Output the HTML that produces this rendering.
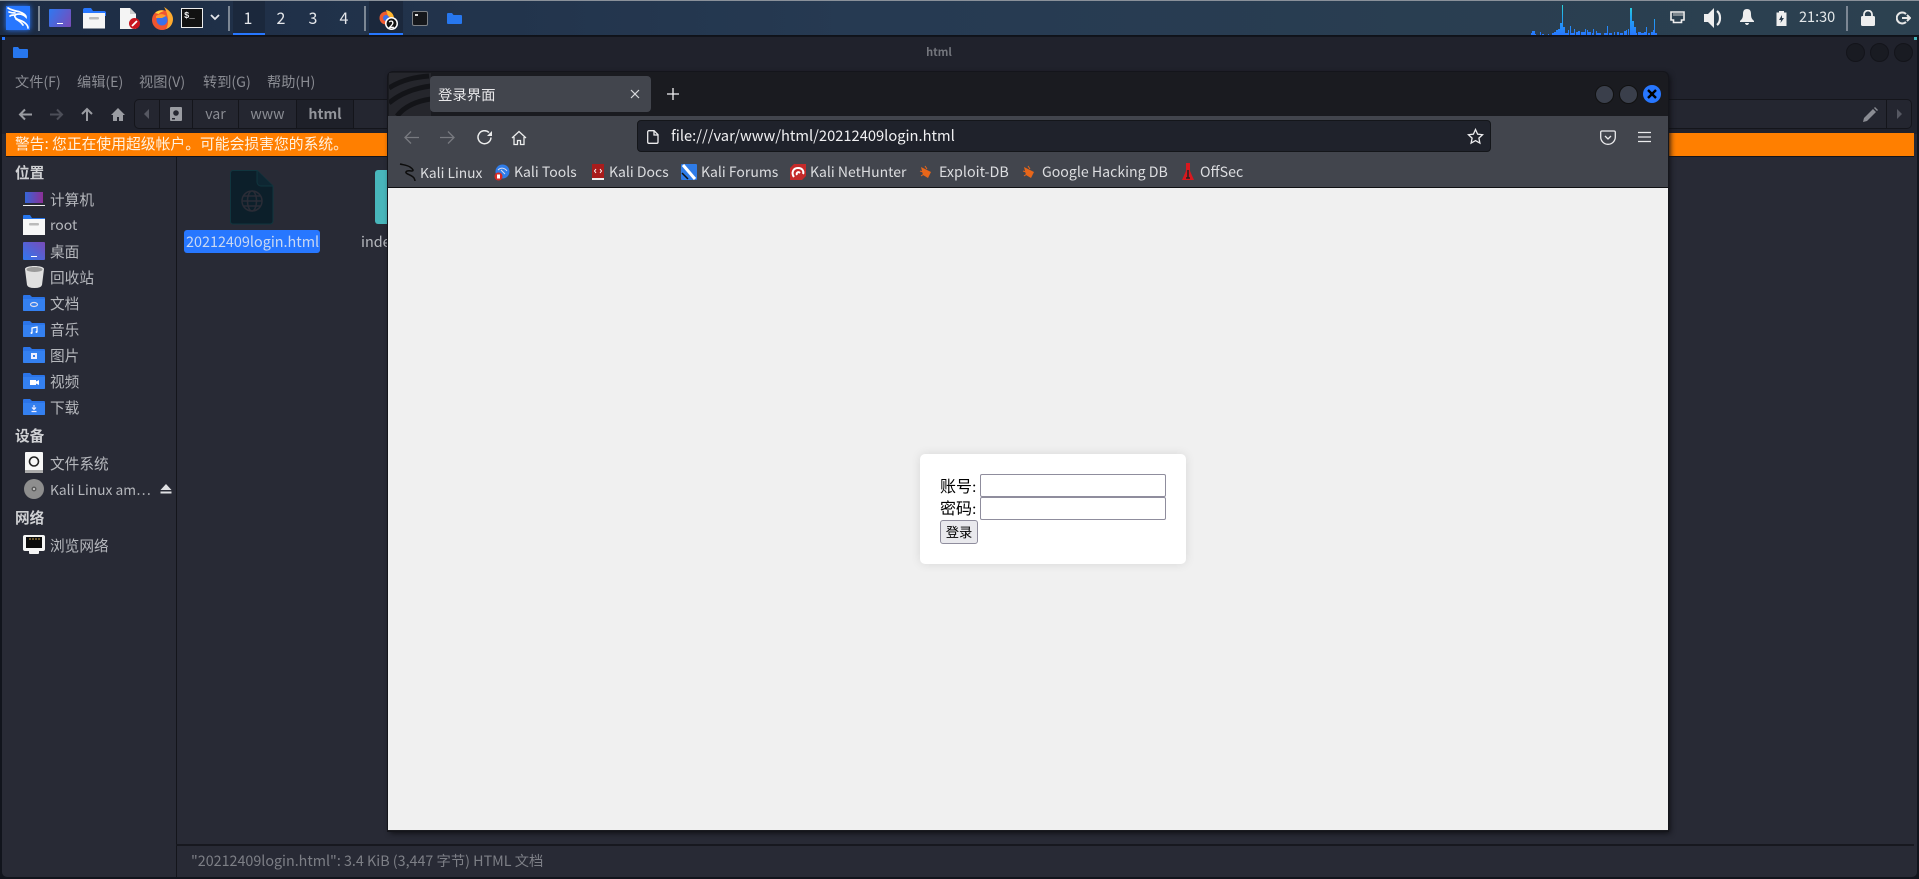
<!DOCTYPE html>
<html><head><meta charset="utf-8"><title>登录界面</title>
<style>
html,body{margin:0;padding:0;width:1919px;height:879px;overflow:hidden;background:#11141c}
body{position:relative;font-family:"Noto Sans CJK SC","Liberation Sans",sans-serif;font-size:14px}
.a,.t,svg{position:absolute;display:block}
.t{white-space:nowrap;line-height:20px;height:20px}
.m{color:#8a8c93;font-size:14.2px}
.s{color:#b6b8bd}
.c{font-size:14.67px}
.h{color:#cfd0d3;font-weight:700;font-size:14.67px}
.b{color:#dcdde0}
.ws{color:#e4e6ea;font-size:16px;width:32px;text-align:center}
input{position:absolute;box-sizing:border-box;margin:0;padding:1px 2px;border:1px solid #8f8d9d;border-radius:2px;background:#fff}
</style></head><body>

<!-- top panel -->
<div class="a" style="left:0;top:0;width:1919px;height:35px;background:linear-gradient(90deg,#1d2c44,#263a52 45%,#2c4150)"></div>
<div class="a" style="left:0;top:0;width:1919px;height:1px;background:#8a919a"></div>
<div class="a" style="left:0;top:35px;width:1919px;height:1px;background:#0f1219"></div>

<div class="a" style="left:6px;top:6px;width:24px;height:24px;background:#2777ff;box-shadow:0 0 5px #2777ff"></div>
<svg style="left:5px;top:5px" width="26" height="26" viewBox="0 0 26 26" fill="none" stroke="#fff" stroke-width="1.7" stroke-linecap="round"><path d="M3 3c5 3 9 3 12 4 3 1 6 3 6 5-2-2-4-3-7-3-3 0-5 1-4 3 1 3 7 3 10 6 2 1.500 3 3 3 5"/><path d="M4 7c3 1 4 1 6 1M5 11c1-1 3-1 4-1"/><path d="M11 14c3 2 5 3 7 6"/></svg>
<div class="a" style="left:38px;top:6px;width:2px;height:25px;background:#7c8794"></div>
<div class="a" style="left:49px;top:9px;width:22px;height:18px;border-radius:1px;background:linear-gradient(120deg,#2f78f0,#7a4bb8)"></div>
<div class="a" style="left:57px;top:23px;width:6px;height:1px;background:#fff"></div>
<svg style="left:83px;top:8px" width="23" height="21" viewBox="0 0 23 21"><path d="M0 2q0-2 2-2h6l2 3h11q2 0 2 2v3H0z" fill="#2777ff"/><rect y="5" width="22" height="15.500" fill="#f5f5f5"/><rect x="6" y="9" width="10" height="2.500" rx="1" fill="#bbb"/></svg>
<svg style="left:119px;top:8px" width="22" height="22" viewBox="0 0 22 22"><path d="M1 0h10l6 6v15H1z" fill="#f4f4f4"/><path d="M11 0l6 6h-6z" fill="#ccc"/><circle cx="15.500" cy="15.500" r="5.500" fill="#c8141e"/><path d="M13 18l5-5" stroke="#fff" stroke-width="1.800"/></svg>
<svg style="left:151px;top:7px" width="23" height="23" viewBox="0 0 23 23"><circle cx="11" cy="13" r="10" fill="#f0552f"/><path d="M13 0c5 3 9 7 9 12 0 5-3 9-7 10 3-4 3-14-2-22z" fill="#ffab2e"/><path d="M4 6c3-3 7-3 9-2-3 1-5 2-5 3z" fill="#ffd23d"/><circle cx="11" cy="13" r="5.500" fill="#3b70e8"/><path d="M5 9c3-2 7-3 10 0l-4 2-6 0z" fill="#ff9a2e"/></svg>
<div class="a" style="left:181px;top:8px;width:20px;height:18px;background:#111;border:1px solid #eee"></div>
<div class="t" style="left:184px;top:9px;font-size:9px;line-height:14px;color:#eee;font-family:'Liberation Mono',monospace;font-weight:700;height:14px">$_</div>
<svg style="left:210px;top:13px" width="10" height="9" viewBox="0 0 10 9" fill="none" stroke="#e4e6ea" stroke-width="1.800"><path d="M1 2l4 4 4-4"/></svg>
<div class="a" style="left:228px;top:6px;width:2px;height:25px;background:#7c8794"></div>
<div class="a" style="left:233px;top:1px;width:32px;height:32px;background:#1b283c"></div>
<div class="a" style="left:233px;top:33px;width:32px;height:2px;background:#2777ff"></div>
<div class="t ws" style="left:232px;top:7px">1</div>
<div class="t ws" style="left:265px;top:7px">2</div>
<div class="t ws" style="left:297px;top:7px">3</div>
<div class="t ws" style="left:328px;top:7px">4</div>
<div class="a" style="left:364px;top:6px;width:2px;height:25px;background:#7c8794"></div>
<div class="a" style="left:369px;top:1px;width:34px;height:32px;background:#1b283c"></div>
<div class="a" style="left:369px;top:33px;width:34px;height:2px;background:#2777ff"></div>
<svg style="left:378px;top:9px" width="24" height="22" viewBox="0 0 24 22"><circle cx="8" cy="9" r="6.500" fill="#ee5a30"/><path d="M8 1c5 1 8 4 8 9l-6-3z" fill="#ffb52e"/><circle cx="8" cy="9" r="3" fill="#3b70e8"/><circle cx="13.500" cy="14.500" r="6.500" fill="#fff"/><circle cx="13.500" cy="14.500" r="5" fill="#111"/></svg>
<div class="t" style="left:386px;top:14px;width:11px;text-align:center;font-size:10px;line-height:19px;height:19px;color:#fff;font-weight:700">2</div>
<div class="a" style="left:412px;top:11px;width:14px;height:13px;background:#15171b;border:1px solid #7d8186;border-radius:2px"></div>
<div class="a" style="left:415px;top:14px;width:3px;height:2px;background:#ddd"></div>
<svg style="left:447px;top:13px" width="15" height="11" viewBox="0 0 15 11"><path d="M0 1q0-1 1-1h4l1.500 2H14q1 0 1 1v7q0 1-1 1H1q-1 0-1-1z" fill="#2777ee"/></svg>

<!-- graph -->
<svg style="left:1530px;top:5px" width="128" height="30" viewBox="0 0 128 30">
<defs><linearGradient id="g" x1="0" y1="30" x2="0" y2="0" gradientUnits="userSpaceOnUse"><stop offset="0" stop-color="#2777ff"/><stop offset=".6" stop-color="#22a6f0"/><stop offset="1" stop-color="#2bd4d8"/></linearGradient></defs>
<path fill="url(#g)" d="M1 28h1v2H1zM2 26h3v4H2zM5 29h1v1H5zM10 27h1v3h-1zM12 29h2v1h-2zM18 29h1v1h-1zM22 28h2v2h-2zM24 27h2v3h-2zM26 25h2v5h-2zM28 24h2v6h-2zM30 18h2v12h-2zM32 0h1v30h-1zM33 22h2v8h-2zM35 28h3v2h-3zM38 25h1v5h-1zM40 21h1v9h-1zM41 28h3v2h-3zM44 24h1v6h-1zM46 27h2v3h-2zM48 26h2v4h-2zM51 27h4v3h-4zM55 24h1v6h-1zM57 25h1v5h-1zM58 27h3v3h-3zM62 28h1v2h-1zM63 24h1v6h-1zM66 26h1v4h-1zM67 28h4v2h-4zM74 28h3v2h-3zM77 21h1v9h-1zM79 28h3v2h-3zM84 27h1v3h-1zM87 27h2v3h-2zM90 28h3v2h-3zM94 26h2v4h-2zM96 25h1v5h-1zM98 24h1v6h-1zM100 3h2v27h-2zM102 16h2v14h-2zM104 22h2v8h-2zM106 28h1v2h-1zM108 27h3v3h-3zM111 28h3v2h-3zM114 27h2v3h-2zM116 22h1v8h-1zM118 28h2v2h-2zM121 27h2v3h-2zM123 25h1v5h-1zM124 14h1v16h-1zM125 28h2v2h-2z"/></svg>
<svg style="left:1670px;top:11px" width="15" height="13" viewBox="0 0 15 13" fill="none" stroke="#eee"><path d="M1 1h13v8h-2.500v2.500h-8V9H1z" stroke-width="1.600"/><path d="M4 2v3M6 2v3M8 2v3M10 2v3M12 2v3" stroke="#ccc" stroke-width="1"/></svg>
<svg style="left:1704px;top:8px" width="20" height="20" viewBox="0 0 20 20" fill="none"><path d="M0 6h4l6-6v20l-6-6H0z" fill="#eee"/><path d="M13 3c4 3 4 11 0 14" stroke="#eee" stroke-width="2.200"/></svg>
<svg style="left:1739px;top:9px" width="16" height="16" viewBox="0 0 16 16"><path d="M8 0c3 0 4 2 4 5 0 4 1 5 3 7v1H1v-1c2-2 3-3 3-7 0-3 1-5 4-5zM6 14h4c0 1-1 2-2 2s-2-1-2-2z" fill="#eee"/></svg>
<svg style="left:1776px;top:11px" width="11" height="15" viewBox="0 0 11 15"><path d="M3 0h5v1.500h2.500V15H.5V1.500H3z" fill="#eee"/><path d="M6 4L3 9h2L4.500 12 8 7H6z" fill="#2a3d4e"/></svg>
<div class="t" style="left:1799px;top:7px;font-size:14.5px;color:#e4e8ea">21:30</div>
<div class="a" style="left:1846px;top:6px;width:2px;height:25px;background:#7c8794"></div>
<svg style="left:1861px;top:10px" width="15" height="16" viewBox="0 0 15 16"><rect y="6" width="14" height="10" rx="1.500" fill="#eee"/><path d="M3 7V4.500a4 4 0 0 1 8 0V7" fill="none" stroke="#eee" stroke-width="1.800"/></svg>
<svg style="left:1896px;top:11px" width="15" height="14" viewBox="0 0 15 14" fill="none" stroke="#e8e8e8" stroke-width="2"><path d="M10 3a5.500 5.500 0 1 0 0 8"/><path d="M6 7h8M11 4l3 3-3 3"/></svg>

<!-- file manager -->
<div class="a" style="left:2px;top:37px;width:1915px;height:840px;background:#282a35;border-radius:5px"></div>
<div class="a" style="left:2px;top:37px;width:1915px;height:97px;background:#20222c;border-radius:5px 5px 0 0"></div>
<div class="a" style="left:2px;top:37px;width:3px;height:3px;background:#2777ff"></div>
<div class="a" style="left:1914px;top:37px;width:3px;height:3px;background:#44b4b8"></div>
<svg style="left:13px;top:47px" width="15" height="11" viewBox="0 0 15 11"><path d="M0 1q0-1 1-1h4l1.500 2H14q1 0 1 1v7q0 1-1 1H1q-1 0-1-1z" fill="#2777ee"/></svg>
<div class="t" style="left:899px;top:42px;width:80px;text-align:center;font-size:11px;font-weight:700;color:#74767d">html</div>
<div class="a" style="left:1846px;top:43px;width:17px;height:17px;border-radius:50%;background:#191b22;border:1px solid #13141a"></div>
<div class="a" style="left:1870px;top:43px;width:17px;height:17px;border-radius:50%;background:#191b22;border:1px solid #13141a"></div>
<div class="a" style="left:1894px;top:43px;width:17px;height:17px;border-radius:50%;background:#191b22;border:1px solid #13141a"></div>

<div class="t m" style="left:15px;top:72px">文件(F)</div>
<div class="t m" style="left:77px;top:72px">编辑(E)</div>
<div class="t m" style="left:139px;top:72px">视图(V)</div>
<div class="t m" style="left:203px;top:72px">转到(G)</div>
<div class="t m" style="left:267px;top:72px">帮助(H)</div>

<svg style="left:18px;top:107px" width="115" height="15" viewBox="0 0 115 15" fill="none" stroke-width="2"><path d="M14 7.500H2M7 2.500l-5 5 5 5" stroke="#9a9ca2"/><path d="M32 7.500h12M39 2.500l5 5-5 5" stroke="#4c4e58"/><path d="M69 14V2M64 7l5-5 5 5" stroke="#9a9ca2"/><path d="M100 1l-7 7h2v6h4v-4h2v4h4V8h2z" fill="#9a9ca2" stroke="none"/></svg>

<div class="a" style="left:134px;top:99px;width:1776px;height:28px;border:1px solid #14151b;border-radius:5px;background:#242630"></div>
<div class="a" style="left:159px;top:100px;width:1px;height:28px;background:#14151b"></div>
<div class="a" style="left:192px;top:100px;width:1px;height:28px;background:#14151b"></div>
<div class="a" style="left:238px;top:100px;width:1px;height:28px;background:#14151b"></div>
<div class="a" style="left:296px;top:100px;width:1px;height:28px;background:#14151b"></div>
<div class="a" style="left:297px;top:100px;width:56px;height:28px;background:#1e2029"></div>
<div class="a" style="left:353px;top:100px;width:1px;height:28px;background:#14151b"></div>
<svg style="left:143px;top:108px" width="8" height="12" viewBox="0 0 8 12"><path d="M6 1L1 6l5 5z" fill="#565862"/></svg>
<svg style="left:170px;top:107px" width="12" height="14" viewBox="0 0 12 14"><path d="M1 0h10q1 0 1 1v12q0 1-1 1H1q-1 0-1-1V1q0-1 1-1z" fill="#9a9ca2"/><circle cx="6" cy="6" r="2.800" fill="#242630"/><rect x="2" y="11" width="3" height="1.500" fill="#242630"/></svg>
<div class="t m" style="left:193px;top:104px;width:45px;text-align:center">var</div>
<div class="t m" style="left:239px;top:104px;width:57px;text-align:center">www</div>
<div class="t m" style="left:297px;top:104px;width:56px;text-align:center;font-weight:700;color:#93959b">html</div>
<svg style="left:1863px;top:107px" width="15" height="15" viewBox="0 0 15 15"><path d="M0 15l1-4L10 2l3 3-9 9zM11 1l1-1 3 3-1 1z" fill="#8a8c93"/></svg>
<div class="a" style="left:1886px;top:100px;width:1px;height:28px;background:#14151b"></div>
<svg style="left:1895px;top:108px" width="8" height="12" viewBox="0 0 8 12"><path d="M2 1l5 5-5 5z" fill="#565862"/></svg>

<div class="a" style="left:6px;top:133px;width:1908px;height:23px;background:#ff7f00"></div>
<div class="t" style="left:15px;top:134px;color:#fff2e2;font-size:14.8px">警告: 您正在使用超级帐户。可能会损害您的系统。</div>
<div class="a" style="left:6px;top:156px;width:1908px;height:1px;background:#14151b"></div>

<!-- sidebar -->
<div class="a" style="left:176px;top:157px;width:1px;height:720px;background:#14151b"></div>
<div class="a" style="left:176px;top:844px;width:1738px;height:2px;background:#17181f"></div>
<div class="t h" style="left:15px;top:163px">位置</div>
<div class="t s c" style="left:50px;top:190px">计算机</div>
<div class="t s" style="left:50px;top:215px">root</div>
<div class="t s c" style="left:50px;top:242px">桌面</div>
<div class="t s c" style="left:50px;top:268px">回收站</div>
<div class="t s c" style="left:50px;top:294px">文档</div>
<div class="t s c" style="left:50px;top:320px">音乐</div>
<div class="t s c" style="left:50px;top:346px">图片</div>
<div class="t s c" style="left:50px;top:372px">视频</div>
<div class="t s c" style="left:50px;top:398px">下载</div>
<div class="t h" style="left:15px;top:426px">设备</div>
<div class="t s c" style="left:50px;top:454px">文件系统</div>
<div class="t s" style="left:50px;top:479px;font-size:13.8px">Kali Linux am…</div>
<div class="t h" style="left:15px;top:508px">网络</div>
<div class="t s c" style="left:50px;top:536px">浏览网络</div>

<svg style="left:23px;top:192px" width="22" height="15" viewBox="0 0 22 15"><defs><linearGradient id="p" x1="0" x2="1"><stop offset="0" stop-color="#3566d8"/><stop offset="1" stop-color="#8d2f96"/></linearGradient></defs><rect x="2" y="0" width="18" height="11" fill="url(#p)"/><rect x="0" y="13" width="22" height="1" fill="#eee"/></svg>
<svg style="left:23px;top:215px" width="22" height="20" viewBox="0 0 22 20"><path d="M0 1q0-1 1-1h6l2 3h13v3H0z" fill="#2777ee"/><rect y="4" width="22" height="16" fill="#f7f7f7"/><rect x="6" y="8" width="10" height="2.500" rx="1" fill="#bbb"/></svg>
<svg style="left:23px;top:242px" width="22" height="18" viewBox="0 0 22 18"><defs><linearGradient id="q" x1="0" x2="1" y1="1" y2="0"><stop offset="0" stop-color="#2f78f0"/><stop offset="1" stop-color="#7a4bb8"/></linearGradient></defs><rect width="22" height="18" rx="1" fill="url(#q)"/><rect x="8" y="14" width="6" height="1" fill="#fff"/></svg>
<svg style="left:25px;top:266px" width="19" height="22" viewBox="0 0 19 22"><path d="M0 3c0-4 19-4 19 0l-2 16q-1 3-7.500 3T2 19z" fill="#e0e0e0"/><ellipse cx="9.500" cy="3.500" rx="8" ry="2.500" fill="#9a9a9a"/></svg>
<svg style="left:23px;top:295px" width="22" height="16" viewBox="0 0 22 16"><path d="M0 1q0-1 1-1h6l2 2h12q1 0 1 1v12q0 1-1 1H1q-1 0-1-1z" fill="#2b74e8"/><path d="M0 4h22v11q0 1-1 1H1q-1 0-1-1z" fill="#3480f0"/><ellipse cx="11" cy="9.500" rx="3.500" ry="2" fill="none" stroke="#dde" stroke-width="1.200"/></svg>
<svg style="left:23px;top:321px" width="22" height="16" viewBox="0 0 22 16"><path d="M0 1q0-1 1-1h6l2 2h12q1 0 1 1v12q0 1-1 1H1q-1 0-1-1z" fill="#2b74e8"/><path d="M0 4h22v11q0 1-1 1H1q-1 0-1-1z" fill="#3480f0"/><path d="M9 12V7l5-1v5" fill="none" stroke="#fff" stroke-width="1.200"/><circle cx="8.500" cy="12" r="1" fill="#fff"/><circle cx="13.500" cy="11" r="1" fill="#fff"/></svg>
<svg style="left:23px;top:347px" width="22" height="16" viewBox="0 0 22 16"><path d="M0 1q0-1 1-1h6l2 2h12q1 0 1 1v12q0 1-1 1H1q-1 0-1-1z" fill="#2b74e8"/><path d="M0 4h22v11q0 1-1 1H1q-1 0-1-1z" fill="#3480f0"/><rect x="8" y="6" width="6" height="6" fill="#eef"/><rect x="10" y="8" width="2" height="2" fill="#3480f0"/></svg>
<svg style="left:23px;top:373px" width="22" height="16" viewBox="0 0 22 16"><path d="M0 1q0-1 1-1h6l2 2h12q1 0 1 1v12q0 1-1 1H1q-1 0-1-1z" fill="#2b74e8"/><path d="M0 4h22v11q0 1-1 1H1q-1 0-1-1z" fill="#3480f0"/><path d="M7 7h6v1.500L16 7v5l-3-1.500V12H7z" fill="#fff"/></svg>
<svg style="left:23px;top:399px" width="22" height="16" viewBox="0 0 22 16"><path d="M0 1q0-1 1-1h6l2 2h12q1 0 1 1v12q0 1-1 1H1q-1 0-1-1z" fill="#2b74e8"/><path d="M0 4h22v11q0 1-1 1H1q-1 0-1-1z" fill="#3480f0"/><path d="M11 6v4M9 8.500l2 2 2-2M8.500 12.500h5" fill="none" stroke="#eef" stroke-width="1.200"/></svg>
<svg style="left:25px;top:452px" width="18" height="21" viewBox="0 0 18 21"><rect width="18" height="19" rx="1" fill="#f7f7f7"/><circle cx="9" cy="9.500" r="4.500" fill="none" stroke="#222" stroke-width="1.600"/><rect y="18" width="18" height="3" fill="#aaa"/></svg>
<svg style="left:24px;top:479px" width="20" height="20" viewBox="0 0 20 20"><circle cx="10" cy="10" r="10" fill="#8e8e8e"/><circle cx="10" cy="10" r="2.500" fill="#5a5a5a"/><circle cx="10" cy="10" r="1" fill="#ddd"/></svg>
<svg style="left:160px;top:484px" width="12" height="10" viewBox="0 0 12 10"><path d="M6 0l5.500 6H.5z" fill="#dfe0e3"/><rect x=".5" y="7.500" width="11" height="2" fill="#dfe0e3"/></svg>
<svg style="left:23px;top:535px" width="22" height="19" viewBox="0 0 22 19"><rect width="22" height="16" rx="2" fill="#f5f5f5"/><rect x="3" y="2" width="16" height="11" fill="#0b0b0b"/><rect x="6" y="15" width="10" height="4" rx="1" fill="#f5f5f5"/><path d="M7 3v2M10 3v2M13 3v2M16 3v2" stroke="#c9a24a"/></svg>

<!-- file icons -->
<svg style="left:230px;top:170px" width="44" height="55" viewBox="0 0 44 55"><path d="M3 .5h24L43 16v35a3 3 0 0 1-3 3H3a2.500 2.500 0 0 1-2.500-3V3A2.500 2.500 0 0 1 3 .5z" fill="#0c1f2a" stroke="#10353e"/><path d="M27 .5V12a4 4 0 0 0 4 4h12" fill="#0e2632" stroke="#10353e"/><g fill="none" stroke="#2a2c36" stroke-width="1.500"><circle cx="22" cy="31" r="10"/><ellipse cx="22" cy="31" rx="4.500" ry="10"/><path d="M12 31h20M13.500 26h17M13.500 36h17"/></g></svg>
<div class="a" style="left:184px;top:230px;width:136px;height:23px;background:#2777ff;border-radius:3px"></div>
<div class="t" style="left:186px;top:232px;color:#c9d8f2;font-size:14.4px">20212409login.html</div>
<div class="t s" style="left:361px;top:232px;font-size:14.4px">index.html</div>
<div class="a" style="left:375px;top:170px;width:20px;height:54px;background:#48b6bb;border-radius:3px"></div>

<div class="t" style="left:191px;top:851px;color:#7d7f86;font-size:14.3px">"20212409login.html": 3.4 KiB (3,447 字节) HTML 文档</div>

<!-- browser -->
<div class="a" style="left:388px;top:72px;width:1280px;height:759px;background:#1a1b20;border-radius:5px 5px 0 0;box-shadow:0 0 0 1px #14151b,2px 2px 6px #0d0e12"></div>
<svg style="left:389px;top:73px" width="42" height="43" viewBox="0 0 42 43" fill="none" stroke="#131418" stroke-width="5"><path d="M0 0L42 0 42 43 0 43z" fill="#25262c" stroke="none"/><path d="M0 15C14 6 28 4 40 3M0 30C12 20 26 15 42 13M8 43C16 33 28 28 42 26"/></svg>
<div class="a" style="left:430px;top:76px;width:221px;height:36px;background:#42454d;border-radius:4px"></div>
<div class="t" style="left:438px;top:85px;color:#e8e8ea;font-size:14.4px">登录界面</div>
<svg style="left:630px;top:89px" width="10" height="10" viewBox="0 0 10 10" stroke="#d8d9dc" stroke-width="1.200"><path d="M1 1l8 8M9 1l-8 8"/></svg>
<svg style="left:667px;top:88px" width="12" height="12" viewBox="0 0 12 12" stroke="#f0f0f2" stroke-width="1.300"><path d="M6 0v12M0 6h12"/></svg>
<div class="a" style="left:1595px;top:85px;width:17px;height:17px;border-radius:50%;background:#3a3f4b;border:1px solid #111"></div>
<div class="a" style="left:1619px;top:85px;width:17px;height:17px;border-radius:50%;background:#3a3f4b;border:1px solid #111"></div>
<div class="a" style="left:1643px;top:85px;width:18px;height:18px;border-radius:50%;background:#2777ff"></div>
<svg style="left:1647px;top:89px" width="10" height="10" viewBox="0 0 10 10" stroke="#000" stroke-width="2.400"><path d="M1 1l8 8M9 1l-8 8"/></svg>

<div class="a" style="left:388px;top:116px;width:1280px;height:72px;background:#42454d"></div>
<div class="a" style="left:388px;top:187px;width:1280px;height:1px;background:#101114"></div>
<svg style="left:403px;top:130px" width="130" height="16" viewBox="0 0 130 16" fill="none"><path d="M16 7.500H2M8 1.500l-6 6 6 6" stroke="#787a80" stroke-width="1.300"/><path d="M37 7.500h14M45 1.500l6 6-6 6" stroke="#787a80" stroke-width="1.300"/><g transform="translate(1)"><path d="M85 2.500a6.500 6.500 0 1 0 2 5" stroke="#eceded" stroke-width="1.500"/><path d="M88 1v5h-5z" fill="#eceded"/></g><g transform="translate(2)"><path d="M107 8l7-6.500L121 8M109 7v7.500h3.500v-4h3v4h3.500V7" stroke="#eceded" stroke-width="1.300"/></g></svg>
<div class="a" style="left:637px;top:120px;width:852px;height:30px;background:#1f222b;border:1px solid #14161a;border-radius:4px"></div>
<svg style="left:647px;top:130px" width="12" height="14" viewBox="0 0 12 14"><path d="M2 .7h5l4 4V12a1.300 1.300 0 0 1-1.300 1.300H2A1.300 1.300 0 0 1 .7 12V2A1.300 1.300 0 0 1 2 .7zM7 1v4h4" fill="none" stroke="#ececee" stroke-width="1.300"/></svg>
<div class="t" style="left:671px;top:126px;font-size:14.7px;color:#f0f0f2">file:///var/www/html/20212409login.html</div>
<svg style="left:1467px;top:128px" width="17" height="17" viewBox="0 0 17 17"><path d="M8.500 1.500l2.100 4.600 5 .6-3.700 3.400 1 5-4.400-2.500-4.400 2.500 1-5L1.400 6.700l5-.6z" fill="none" stroke="#ececee" stroke-width="1.300"/></svg>
<svg style="left:1600px;top:130px" width="16" height="15" viewBox="0 0 16 15" fill="none" stroke="#ececee" stroke-width="1.300"><path d="M2 1h12a1.300 1.300 0 0 1 1.300 1.300V7A7.300 7.300 0 0 1 .7 7V2.300A1.300 1.300 0 0 1 2 1z"/><path d="M5 6l3 3 3-3"/></svg>
<svg style="left:1638px;top:131px" width="13" height="12" viewBox="0 0 13 12" stroke="#ececee" stroke-width="1.300"><path d="M0 1.500h13M0 6h13M0 10.500h13"/></svg>

<svg style="left:399px;top:163px" width="18" height="19" viewBox="0 0 18 19" fill="none" stroke="#0d0d0d" stroke-width="1.500"><path d="M1 1c4 1 7 1 10 3s4 4 2 4-5-1-6 1 6 3 8 6c1 2 1 3 1 3"/></svg>
<div class="t b" style="left:420px;top:162px;font-size:13.8px">Kali Linux</div>
<svg style="left:494px;top:164px" width="16" height="17" viewBox="0 0 16 17"><circle cx="8.500" cy="7.500" r="7" fill="#2f7ce8"/><path d="M4 6c3-3 7-2 9 1M7 6l4 4" stroke="#dde" fill="none"/><circle cx="4.500" cy="12.500" r="4" fill="#d82a24"/><rect x="3" y="10.500" width="3" height="4" fill="#fff"/></svg>
<div class="t b" style="left:514px;top:162px">Kali Tools</div>
<svg style="left:591px;top:164px" width="14" height="16" viewBox="0 0 14 16"><rect x="1" width="12" height="14" fill="#a81c1c"/><rect x="1" y="14" width="12" height="2" fill="#eee"/><path d="M5 5L3.500 7 5 9M9 5l1.500 2L9 9" stroke="#fff" fill="none"/></svg>
<div class="t b" style="left:609px;top:162px">Kali Docs</div>
<svg style="left:681px;top:164px" width="16" height="16" viewBox="0 0 16 16"><rect width="16" height="16" rx="1" fill="#2f7ce8"/><path d="M2 1l12 14" stroke="#fff" stroke-width="3"/><path d="M1 9l6 6" stroke="#111" stroke-width="1.500"/></svg>
<div class="t b" style="left:701px;top:162px">Kali Forums</div>
<svg style="left:790px;top:164px" width="16" height="16" viewBox="0 0 16 16"><path d="M4 0h12v12l-4 4H0V4z" fill="#c42a2a"/><path d="M4 13C1 9 3 4 8 4s6 4 5 6M7 11c-1-2 1-4 3-2" fill="none" stroke="#fff" stroke-width="2"/></svg>
<div class="t b" style="left:810px;top:162px">Kali NetHunter</div>
<svg style="left:919px;top:165px" width="14" height="14" viewBox="0 0 14 14"><path d="M2 2l10 5-3 6-5-3z" fill="#e8661a"/><path d="M1 6l3 1M2 11l3-2M6 1l2 3" stroke="#e8661a"/></svg>
<div class="t b" style="left:939px;top:162px;font-size:14.3px">Exploit-DB</div>
<svg style="left:1022px;top:165px" width="14" height="14" viewBox="0 0 14 14"><path d="M2 2l10 5-3 6-5-3z" fill="#e8661a"/><path d="M1 6l3 1M2 11l3-2M6 1l2 3" stroke="#e8661a"/></svg>
<div class="t b" style="left:1042px;top:162px;font-size:14.15px">Google Hacking DB</div>
<svg style="left:1182px;top:163px" width="12" height="18" viewBox="0 0 12 18"><path d="M4 0h4v8l4 9H0l4-9z" fill="#d8181e"/><path d="M6 7v8M4 15h4" stroke="#222" stroke-width="1.500"/></svg>
<div class="t b" style="left:1200px;top:162px;font-size:14.2px">OffSec</div>

<!-- page -->
<div class="a" style="left:388px;top:188px;width:1280px;height:642px;background:#f0f0f0"></div>
<div class="a" style="left:920px;top:454px;width:266px;height:110px;background:#fff;border-radius:5px;box-shadow:0 0 10px rgba(0,0,0,.1)"></div>
<div class="t" style="left:940px;top:477px;height:22px;line-height:22px;font-size:16px;color:#000;font-family:'Liberation Serif','WenQuanYi Zen Hei','Noto Sans CJK SC',sans-serif">账号:</div>
<div class="t" style="left:940px;top:499px;height:22px;line-height:22px;font-size:16px;color:#000;font-family:'Liberation Serif','WenQuanYi Zen Hei','Noto Sans CJK SC',sans-serif">密码:</div>
<input type="text" style="left:980px;top:474px;width:186px;height:23px">
<input type="password" style="left:980px;top:497px;width:186px;height:23px">
<div class="a" style="left:940px;top:520px;width:38px;height:24px;box-sizing:border-box;background:#e9e9ed;border:1px solid #8f8d9d;border-radius:3px;text-align:center;font-size:13.300px;line-height:22px;color:#000">登录</div>
</body></html>
